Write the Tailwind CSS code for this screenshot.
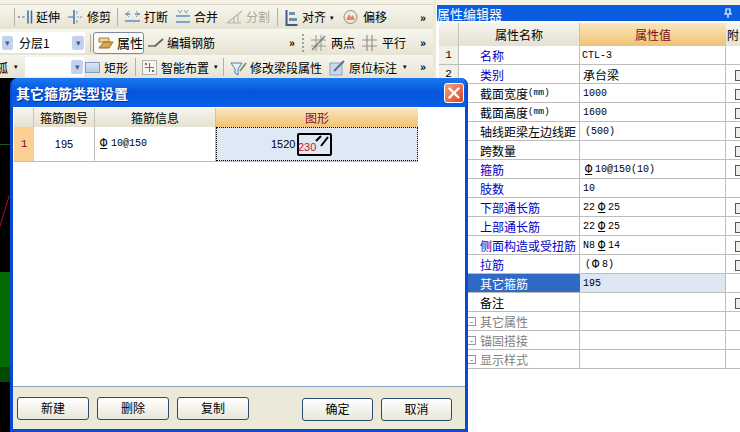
<!DOCTYPE html>
<html lang="zh"><head><meta charset="utf-8">
<script src="https://cdn.jsdelivr.net/npm/@tailwindcss/browser@4"></script>
<title>属性编辑器</title></head>
<body class="m-0">
<div class="relative w-[740px] h-[432px] overflow-hidden flex bg-[#ece9d8] text-[12px] leading-none text-black font-['Noto_Sans_CJK_SC','Liberation_Sans',sans-serif]">

<!-- left: toolbars + canvas -->
<div class="w-[433px] h-full flex flex-col shrink-0">
  <div class="h-[5px] bg-[#f3f1e6] border-b border-[#d8d4c0]"></div>
  <!-- row 1 -->
  <div class="h-[24px] flex items-center bg-gradient-to-b from-[#f7f6ee] to-[#e6e3d2] shrink-0 pl-[14px] relative">
    <div class="w-px h-[18px] bg-[#b5b19c] mr-[2px]"></div>
    <svg class="w-[16px] h-[16px] mr-[3px]" viewBox="0 0 16 16"><path d="M1 8h3M5.5 8h3" stroke="#5a8fc0" stroke-width="1.5" stroke-dasharray="2 1"/><path d="M11 1.5v13M14.5 1.5v13" stroke="#3a6ea5" stroke-width="1.5"/></svg>
    <span class="w-[24px] mr-[8px]">延伸</span>
    <svg class="w-[16px] h-[16px] mr-[3px]" viewBox="0 0 16 16"><path d="M6 1v14" stroke="#3a6ea5" stroke-width="1.5"/><path d="M0 8h5" stroke="#6f9cc5" stroke-width="1.5"/><path d="M9 8h6" stroke="#9bb9d6" stroke-width="1.5" stroke-dasharray="2 1"/><path d="M9 2v3M9 11v3" stroke="#6f9cc5"/></svg>
    <span class="w-[24px] mr-[6px]">修剪</span>
    <div class="w-px h-[18px] bg-[#b5b19c] mr-[6px]"></div>
    <svg class="w-[17px] h-[16px] mr-[3px]" viewBox="0 0 17 16"><path d="M1 5h5M11 5h5M1 12h15" stroke="#5a8fc0" stroke-width="1.5"/><path d="M5 2l-3 3 3 3M12 2l3 3-3 3" stroke="#7aa0c4" fill="none"/></svg>
    <span class="w-[24px] mr-[7px]">打断</span>
    <svg class="w-[16px] h-[16px] mr-[3px]" viewBox="0 0 16 16"><path d="M1 7h14M1 13h14" stroke="#5a8fc0" stroke-width="1.5"/><path d="M3 1l2 3 2-3M9 1l2 3 2-3" stroke="#7aa0c4" fill="none"/></svg>
    <span class="w-[24px] mr-[8px]">合并</span>
    <svg class="w-[18px] h-[16px] mr-[2px]" viewBox="0 0 18 16"><path d="M1 14L16 2M1 14h14M8 14V8M12 14V5" stroke="#b9b7a8" stroke-width="1.2" fill="none"/></svg>
    <span class="w-[24px] mr-[7px] text-[#a9a798]">分割</span>
    <div class="w-px h-[18px] bg-[#b5b19c] mr-[7px]"></div>
    <svg class="w-[13px] h-[17px] mr-[4px]" viewBox="0 0 13 17"><path d="M1.5 1v15h11" stroke="#445a78" stroke-width="2" fill="none"/><rect x="4" y="3" width="6" height="3" fill="#6f8fb5"/><rect x="4" y="9" width="8" height="3" fill="#6f8fb5"/></svg>
    <span class="w-[24px] mr-[4px]">对齐</span>
    <span class="text-[7px] w-[6px] mr-[7px]">▾</span>
    <svg class="w-[15px] h-[16px] mr-[5px]" viewBox="0 0 15 16"><circle cx="7.5" cy="8" r="6.5" fill="#f4ead8" stroke="#9b8a70"/><path d="M3 11l3-6 2 3 2-2 2 5z" fill="#d98a7a"/></svg>
    <span class="w-[24px]">偏移</span>
    <span class="ml-auto mr-[5px] text-[11px] font-bold w-[8px]">»</span>
  </div>
  <!-- row 2 -->
  <div class="h-[26px] flex items-center bg-gradient-to-b from-[#f7f6ee] to-[#e6e3d2] border-t border-[#f8f7f0] shrink-0 relative">
    <div class="w-[14px] h-[21px] bg-white flex items-center pl-[2px]"><div class="w-[11px] h-[14px] bg-[#c4d2ec] rounded-[2px] text-[#3d5f9c] text-[9px] flex items-center justify-center">▾</div></div>
    <div class="w-[71px] h-[21px] bg-white flex items-center pl-[5px] pr-[1px] justify-between"><span>分层1</span><div class="w-[12px] h-[14px] bg-[#c4d2ec] rounded-[2px] text-[#3d5f9c] text-[9px] flex items-center justify-center">▾</div></div>
    <div class="w-px h-[18px] bg-[#b5b19c] ml-[5px] mr-[2px]"></div>
    <div class="w-[51px] h-[22px] border border-[#7a8ca8] rounded-[3px] bg-[#fbfaf4] flex items-center pl-[4px] mr-[3px]">
      <svg class="w-[16px] h-[14px] mr-[3px]" viewBox="0 0 16 14"><path d="M1 2h10v4H1z" fill="#f2d58c" stroke="#a08040"/><path d="M1 12l5-6h9l-4 6z" fill="#dca94e" stroke="#8a6a30"/></svg>
      <span class="text-[13px]">属性</span>
    </div>
    <svg class="w-[18px] h-[14px] mr-[2px]" viewBox="0 0 18 14"><path d="M1 10h8" stroke="#666" stroke-width="1.5"/><path d="M8 10l8-7" stroke="#6b6b5a" stroke-width="2"/></svg>
    <span class="w-[48px]">编辑钢筋</span>
    <span class="ml-[74px] text-[11px] font-bold w-[8px]">»</span>
    <div class="ml-[5px] h-[18px] border-l-2 border-dotted border-[#a5a18c] mr-[7px]"></div>
    <svg class="w-[15px] h-[16px] mr-[5px]" viewBox="0 0 15 16"><path d="M0 5h15M0 11h15M5 0v16M10 0v16" stroke="#9a9a8c"/><path d="M1 15L14 1" stroke="#6f8a6f" stroke-width="1.5"/></svg>
    <span class="w-[24px] mr-[7px]">两点</span>
    <svg class="w-[15px] h-[16px] mr-[5px]" viewBox="0 0 15 16"><path d="M0 5h15M0 11h15M5 0v16M10 0v16" stroke="#9a8f8c" stroke-width="1.2"/></svg>
    <span class="w-[24px]">平行</span>
    <span class="ml-auto mr-[5px] text-[11px] font-bold w-[8px]">»</span>
  </div>
  <!-- row 3 -->
  <div class="h-[23px] flex items-center bg-gradient-to-b from-[#f7f6ee] to-[#e6e3d2] shrink-0 relative">
    <span class="w-[8px] overflow-hidden whitespace-nowrap flex justify-end mr-[6px] mt-[3px]">孤</span>
    <span class="text-[7px] w-[6px] mr-[5px]">▾</span>
    <div class="w-[59px] h-[20px] bg-white flex items-center justify-end pr-[1px] mr-[1px]"><div class="w-[12px] h-[14px] bg-[#c4d2ec] rounded-[2px] text-[#3d5f9c] text-[9px] flex items-center justify-center">▾</div></div>
    <div class="w-[15px] h-[11px] bg-gradient-to-b from-[#dbe6f5] to-[#b5cbe8] border border-[#7f9cc4] mr-[4px] mt-[2px]"></div>
    <span class="w-[24px] mr-[7px] mt-[3px]">矩形</span>
    <div class="w-px h-[18px] bg-[#b5b19c] mr-[6px]"></div>
    <svg class="w-[15px] h-[15px] mr-[4px] mt-[2px]" viewBox="0 0 15 15"><rect x=".5" y=".5" width="14" height="14" fill="#f4f4ec" stroke="#777" stroke-dasharray="1 1"/><path d="M7.500 3v9M3 7.500h9" stroke="#5a8a5a"/><rect x="3" y="3" width="2" height="2" fill="#c05a4a"/><rect x="10" y="10" width="2" height="2" fill="#4a6fb5"/></svg>
    <span class="w-[48px] mr-[5px] mt-[3px]">智能布置</span>
    <span class="text-[7px] w-[6px] mr-[3px]">▾</span>
    <div class="w-px h-[18px] bg-[#b5b19c] mr-[6px]"></div>
    <svg class="w-[17px] h-[16px] mr-[3px] mt-[2px]" viewBox="0 0 17 16"><path d="M1 3h11L8 9v6L5 13V9z" fill="#e8f0f8" stroke="#4f7fa8"/><path d="M10 11l6-8" stroke="#6b8a5a" stroke-width="1.5"/></svg>
    <span class="w-[72px] mr-[7px] mt-[3px]">修改梁段属性</span>
    <svg class="w-[16px] h-[16px] mr-[4px] mt-[2px]" viewBox="0 0 16 16"><rect x="1" y="3" width="12" height="12" fill="#c9d8ea" stroke="#8aa2c0"/><path d="M5 11L15 1" stroke="#5a6f8a" stroke-width="2"/></svg>
    <span class="w-[48px] mr-[6px] mt-[3px]">原位标注</span>
    <span class="text-[7px] w-[6px]">▾</span>
    <span class="ml-auto mr-[5px] text-[11px] font-bold w-[8px]">»</span>
  </div>
  <!-- canvas -->
  <div class="flex-1 bg-black flex flex-col relative">
    <div class="h-[67px] shrink-0 border-b border-[#1c5a1c]"></div>
    <div class="h-[127px] shrink-0"></div>
    <div class="h-[95px] shrink-0 bg-[#056b05]"></div>
    <div class="h-[15px] shrink-0 bg-[#034a03]"></div>
  </div>
</div>

<!-- gutter -->
<div class="w-[3px] bg-[#ece9d8] shrink-0"></div>

<!-- property panel -->
<div class="flex-1 h-full bg-white flex flex-col min-w-0">
  <div class="h-[5px] bg-[#f3f1e6] shrink-0"></div>
  <div class="h-[16px] shrink-0 ml-px bg-[#0a5ce0] text-white text-[13px] flex items-center justify-between pr-[8px]">
    <span>属性编辑器</span>
    <svg class="w-[8px] h-[10px]" viewBox="0 0 8 10"><path d="M2 1h4v5H2zM0 6h8M4 6v4" stroke="#fff" stroke-width="1.2" fill="none"/></svg>
  </div>
  <div class="pl-[3px] pt-[2px] text-[12px]">
    <div class="grid grid-cols-[20px_121px_146px_20px] h-[23px] text-center items-stretch">
      <div class="bg-gradient-to-b from-[#f6f5ee] to-[#e4e1d0] border-r border-[#c8c5b2]"></div>
      <div class="bg-gradient-to-b from-[#f6f5ee] to-[#e4e1d0] flex items-center justify-center border-r border-[#c8c5b2]">属性名称</div>
      <div class="bg-gradient-to-b from-[#fbe6bd] to-[#f0c272] flex items-center justify-center text-[#7a0c1e]">属性值</div>
      <div class="bg-gradient-to-b from-[#f6f5ee] to-[#e4e1d0] flex items-center pl-px">附</div>
    </div>

    <div class="grid grid-cols-[20px_121px_146px_14px] h-[20px] border-y border-[#bdbdbd] -mt-px [&>div]:pt-px">
      <div class="bg-[#f3f1e7] border-r border-[#bdbdbd] flex items-center justify-center font-['Liberation_Mono'] text-[11px]">1</div>
      <div class="border-r border-[#bdbdbd] flex items-center pl-[21px] text-[#0000c8]">名称</div>
      <div class="border-r border-[#bdbdbd] flex items-center pl-[2px] font-['Liberation_Mono'] text-[10px]">CTL-3</div><div></div>
    </div>
    <div class="grid grid-cols-[20px_121px_146px_14px] h-[19px] border-b border-[#bdbdbd] [&>div]:pt-px">
      <div class="bg-[#f3f1e7] border-r border-[#bdbdbd] flex items-center justify-center font-['Liberation_Mono'] text-[11px]">2</div>
      <div class="border-r border-[#bdbdbd] flex items-center pl-[21px] text-[#0000c8]">类别</div>
      <div class="border-r border-[#bdbdbd] flex items-center pl-[3px]">承台梁</div>
      <div class="pl-[9px] flex items-center"><div class="w-[12px] h-[11px] mt-[2px] shrink-0 border border-[#555] bg-[#eeeeea]"></div></div>
    </div>
    <div class="grid grid-cols-[20px_121px_146px_14px] h-[19px] border-b border-[#bdbdbd] [&>div]:pt-px">
      <div class="bg-[#f3f1e7] border-r border-[#bdbdbd]"></div>
      <div class="border-r border-[#bdbdbd] flex items-center pl-[21px] whitespace-nowrap">截面宽度<span class="font-['Liberation_Mono'] text-[9px]">(mm)</span></div>
      <div class="border-r border-[#bdbdbd] flex items-center pl-[3px] font-['Liberation_Mono'] text-[10px]">1000</div>
      <div class="pl-[9px] flex items-center"><div class="w-[12px] h-[11px] mt-[2px] shrink-0 border border-[#555] bg-[#eeeeea]"></div></div>
    </div>
    <div class="grid grid-cols-[20px_121px_146px_14px] h-[19px] border-b border-[#bdbdbd] [&>div]:pt-px">
      <div class="bg-[#f3f1e7] border-r border-[#bdbdbd]"></div>
      <div class="border-r border-[#bdbdbd] flex items-center pl-[21px] whitespace-nowrap">截面高度<span class="font-['Liberation_Mono'] text-[9px]">(mm)</span></div>
      <div class="border-r border-[#bdbdbd] flex items-center pl-[3px] font-['Liberation_Mono'] text-[10px]">1600</div>
      <div class="pl-[9px] flex items-center"><div class="w-[12px] h-[11px] mt-[2px] shrink-0 border border-[#555] bg-[#eeeeea]"></div></div>
    </div>
    <div class="grid grid-cols-[20px_121px_146px_14px] h-[19px] border-b border-[#bdbdbd] [&>div]:pt-px">
      <div class="bg-[#f3f1e7] border-r border-[#bdbdbd]"></div>
      <div class="border-r border-[#bdbdbd] flex items-center pl-[21px] whitespace-nowrap">轴线距梁左边线距</div>
      <div class="border-r border-[#bdbdbd] flex items-center pl-[5px] font-['Liberation_Mono'] text-[10px]">(500)</div>
      <div class="pl-[9px] flex items-center"><div class="w-[12px] h-[11px] mt-[2px] shrink-0 border border-[#555] bg-[#eeeeea]"></div></div>
    </div>
    <div class="grid grid-cols-[20px_121px_146px_14px] h-[19px] border-b border-[#bdbdbd] [&>div]:pt-px">
      <div class="bg-[#f3f1e7] border-r border-[#bdbdbd]"></div>
      <div class="border-r border-[#bdbdbd] flex items-center pl-[21px]">跨数量</div>
      <div class="border-r border-[#bdbdbd]"></div>
      <div class="pl-[9px] flex items-center"><div class="w-[12px] h-[11px] mt-[2px] shrink-0 border border-[#555] bg-[#eeeeea]"></div></div>
    </div>
    <div class="grid grid-cols-[20px_121px_146px_14px] h-[19px] border-b border-[#bdbdbd] [&>div]:pt-px">
      <div class="bg-[#f3f1e7] border-r border-[#bdbdbd]"></div>
      <div class="border-r border-[#bdbdbd] flex items-center pl-[21px] text-[#0000c8]">箍筋</div>
      <div class="border-r border-[#bdbdbd] flex items-center pl-[5px] font-['Liberation_Mono'] text-[10px] whitespace-nowrap"><span class="underline text-[12px] w-[9px] mr-px">Φ</span>10@150(10)</div>
      <div class="pl-[9px] flex items-center"><div class="w-[12px] h-[11px] mt-[2px] shrink-0 border border-[#555] bg-[#eeeeea]"></div></div>
    </div>
    <div class="grid grid-cols-[20px_121px_146px_14px] h-[19px] border-b border-[#bdbdbd] [&>div]:pt-px">
      <div class="bg-[#f3f1e7] border-r border-[#bdbdbd]"></div>
      <div class="border-r border-[#bdbdbd] flex items-center pl-[21px] text-[#0000c8]">肢数</div>
      <div class="border-r border-[#bdbdbd] flex items-center pl-[3px] font-['Liberation_Mono'] text-[10px]">10</div><div></div>
    </div>
    <div class="grid grid-cols-[20px_121px_146px_14px] h-[19px] border-b border-[#bdbdbd] [&>div]:pt-px">
      <div class="bg-[#f3f1e7] border-r border-[#bdbdbd]"></div>
      <div class="border-r border-[#bdbdbd] flex items-center pl-[21px] text-[#0000c8]">下部通长筋</div>
      <div class="border-r border-[#bdbdbd] flex items-center pl-[3px] font-['Liberation_Mono'] text-[10px]">22<span class="underline text-[12px] w-[9px] ml-[3px] mr-px">Φ</span>25</div>
      <div class="pl-[9px] flex items-center"><div class="w-[12px] h-[11px] mt-[2px] shrink-0 border border-[#555] bg-[#eeeeea]"></div></div>
    </div>
    <div class="grid grid-cols-[20px_121px_146px_14px] h-[19px] border-b border-[#bdbdbd] [&>div]:pt-px">
      <div class="bg-[#f3f1e7] border-r border-[#bdbdbd]"></div>
      <div class="border-r border-[#bdbdbd] flex items-center pl-[21px] text-[#0000c8]">上部通长筋</div>
      <div class="border-r border-[#bdbdbd] flex items-center pl-[3px] font-['Liberation_Mono'] text-[10px]">22<span class="underline text-[12px] w-[9px] ml-[3px] mr-px">Φ</span>25</div>
      <div class="pl-[9px] flex items-center"><div class="w-[12px] h-[11px] mt-[2px] shrink-0 border border-[#555] bg-[#eeeeea]"></div></div>
    </div>
    <div class="grid grid-cols-[20px_121px_146px_14px] h-[19px] border-b border-[#bdbdbd] [&>div]:pt-px">
      <div class="bg-[#f3f1e7] border-r border-[#bdbdbd]"></div>
      <div class="border-r border-[#bdbdbd] flex items-center pl-[21px] text-[#0000c8] whitespace-nowrap">侧面构造或受扭筋</div>
      <div class="border-r border-[#bdbdbd] flex items-center pl-[3px] font-['Liberation_Mono'] text-[10px]">N8<span class="underline text-[12px] w-[9px] ml-[3px] mr-px">Φ</span>14</div>
      <div class="pl-[9px] flex items-center"><div class="w-[12px] h-[11px] mt-[2px] shrink-0 border border-[#555] bg-[#eeeeea]"></div></div>
    </div>
    <div class="grid grid-cols-[20px_121px_146px_14px] h-[19px] border-b border-[#bdbdbd] [&>div]:pt-px">
      <div class="bg-[#f3f1e7] border-r border-[#bdbdbd]"></div>
      <div class="border-r border-[#bdbdbd] flex items-center pl-[21px] text-[#0000c8]">拉筋</div>
      <div class="border-r border-[#bdbdbd] flex items-center pl-[5px] font-['Liberation_Mono'] text-[10px]">(<span class="text-[12px] w-[9px] mx-px">Φ</span>8)</div>
      <div class="pl-[9px] flex items-center"><div class="w-[12px] h-[11px] mt-[2px] shrink-0 border border-[#555] bg-[#eeeeea]"></div></div>
    </div>
    <div class="grid grid-cols-[20px_121px_146px_14px] h-[19px] border-b border-[#bdbdbd] [&>div]:pt-px">
      <div class="bg-[#f3f1e7] border-r border-[#bdbdbd]"></div>
      <div class="bg-[#316ac5] text-white flex items-center pl-[21px]">其它箍筋</div>
      <div class="bg-[#dde7f4] border-r border-[#bdbdbd] flex items-center pl-[3px] font-['Liberation_Mono'] text-[10px]">195</div><div></div>
    </div>
    <div class="grid grid-cols-[20px_121px_146px_14px] h-[19px] border-b border-[#bdbdbd] [&>div]:pt-px">
      <div class="bg-[#f3f1e7] border-r border-[#bdbdbd]"></div>
      <div class="border-r border-[#bdbdbd] flex items-center pl-[21px]">备注</div>
      <div class="border-r border-[#bdbdbd]"></div>
      <div class="pl-[9px] flex items-center"><div class="w-[12px] h-[11px] mt-[2px] shrink-0 border border-[#555] bg-[#eeeeea]"></div></div>
    </div>
    <div class="grid grid-cols-[20px_121px_146px_14px] h-[19px] border-b border-[#bdbdbd] [&>div]:pt-px">
      <div class="bg-[#f3f1e7] border-r border-[#bdbdbd]"></div>
      <div class="border-r border-[#bdbdbd] flex items-center pl-[8px] text-[#808080]"><span class="w-[9px] h-[9px] border border-[#999] mr-[4px] flex items-center justify-center text-[9px] text-[#555]">-</span>其它属性</div>
      <div class="border-r border-[#bdbdbd]"></div><div></div>
    </div>
    <div class="grid grid-cols-[20px_121px_146px_14px] h-[19px] border-b border-[#bdbdbd] [&>div]:pt-px">
      <div class="bg-[#f3f1e7] border-r border-[#bdbdbd]"></div>
      <div class="border-r border-[#bdbdbd] flex items-center pl-[8px] text-[#808080]"><span class="w-[9px] h-[9px] border border-[#999] mr-[4px] flex items-center justify-center text-[9px] text-[#555]">-</span>锚固搭接</div>
      <div class="border-r border-[#bdbdbd]"></div><div></div>
    </div>
    <div class="grid grid-cols-[20px_121px_146px_14px] h-[19px] border-b border-[#bdbdbd] [&>div]:pt-px">
      <div class="bg-[#f3f1e7] border-r border-[#bdbdbd]"></div>
      <div class="border-r border-[#bdbdbd] flex items-center pl-[8px] text-[#808080]"><span class="w-[9px] h-[9px] border border-[#999] mr-[4px] flex items-center justify-center text-[9px] text-[#555]">-</span>显示样式</div>
      <div class="border-r border-[#bdbdbd]"></div><div></div>
    </div>
  </div>
</div>

<!-- red diagonal on canvas -->
<svg class="absolute left-0 top-[195px] w-[10px] h-[31px] pointer-events-none" viewBox="0 0 10 31"><path d="M9.500 0L0 31" stroke="#b01030" stroke-width="1"/></svg>

<!-- dialog window -->
<div class="absolute left-[10px] top-[78px] w-[458px] h-[354px] bg-[#0a4fd8] rounded-t-[7px] border-x-[3px] border-b-[3px] border-[#0a4ad0] flex flex-col">
  <div class="h-[29px] shrink-0 -mx-px flex items-center justify-between rounded-t-[6px] bg-gradient-to-b from-[#1a78f0] via-[#0455dc] to-[#0a5fe8] pl-[4px] pr-[2px]">
    <span class="text-white font-bold text-[14px] [text-shadow:1px_1px_0_#0a2f90]">其它箍筋类型设置</span>
    <div class="w-[20px] h-[20px] rounded-[3px] border border-white bg-gradient-to-br from-[#f0a080] to-[#d8401c] flex items-center justify-center">
      <svg class="w-[12px] h-[12px]" viewBox="0 0 12 12"><path d="M1.500 1.500l9 9M10.500 1.500l-9 9" stroke="#fff" stroke-width="2.400" stroke-linecap="round"/></svg>
    </div>
  </div>
  <div class="flex-1 flex flex-col bg-[#ece9d8] min-h-0">
    <div class="h-[280px] shrink-0 bg-white border-b border-[#8fa3ba] pl-px pt-px">
      <div class="w-[404px] border-b border-[#bdbdbd]">
        <div class="grid grid-cols-[20px_61px_121px_202px] h-[19px]">
          <div class="bg-gradient-to-b from-[#f6f5ee] to-[#e4e1d0] border-r border-[#c8c5b2]"></div>
          <div class="bg-gradient-to-b from-[#f6f5ee] to-[#e4e1d0] border-r border-[#c8c5b2] flex items-center justify-center">箍筋图号</div>
          <div class="bg-gradient-to-b from-[#f6f5ee] to-[#e4e1d0] border-r border-[#c8c5b2] flex items-center justify-center">箍筋信息</div>
          <div class="bg-gradient-to-b from-[#fbe6bd] to-[#f0c272] flex items-center justify-center text-[#8a1030]">图形</div>
        </div>
        <div class="grid grid-cols-[20px_61px_121px_202px] h-[34px]">
          <div class="bg-[#fbd193] flex items-center justify-center font-['Liberation_Mono'] text-[11px] text-[#7a0c1e]">1</div>
          <div class="border-r border-[#bdbdbd] flex items-center justify-center font-['Liberation_Sans'] text-[11px]">195</div>
          <div class="border-r border-[#bdbdbd] flex items-center pl-[5px] font-['Liberation_Mono'] text-[10px] whitespace-nowrap"><span class="underline text-[12px] w-[9px] mr-[2px]">Φ</span>10@150</div>
          <div class="bg-[#dfe8f5] border border-dotted border-black flex items-center pl-[54px]">
            <span class="font-['Liberation_Sans'] text-[11px] w-[26px]">1520</span>
            <div class="relative w-[35px] h-[23px] border-2 border-black rounded-[2px] flex items-end">
              <span class="font-['Liberation_Sans'] text-[11px] text-[#d0102c] mb-[1px] -ml-px">230</span>
              <svg class="absolute right-0 top-0 w-[15px] h-[15px]" viewBox="0 0 15 15"><path d="M1 6L6 1M6 11L13 2" stroke="#000" stroke-width="2"/></svg>
            </div>
          </div>
        </div>
      </div>
    </div>
    <div class="flex-1 flex items-center pl-[4px] pr-[13px] text-[12px]">
      <div class="w-[72px] h-[23px] mr-[8px] border border-[#2a4a70] rounded-[3px] bg-gradient-to-b from-white to-[#e8e6d8] flex items-center justify-center">新建</div>
      <div class="w-[72px] h-[23px] mr-[8px] border border-[#2a4a70] rounded-[3px] bg-gradient-to-b from-white to-[#e8e6d8] flex items-center justify-center">删除</div>
      <div class="w-[72px] h-[23px] border border-[#2a4a70] rounded-[3px] bg-gradient-to-b from-white to-[#e8e6d8] flex items-center justify-center">复制</div>
      <div class="ml-auto w-[71px] h-[23px] mr-[8px] mt-[2px] border border-[#2a4a70] rounded-[3px] bg-gradient-to-b from-white to-[#e8e6d8] flex items-center justify-center">确定</div>
      <div class="w-[71px] h-[23px] mt-[2px] border border-[#2a4a70] rounded-[3px] bg-gradient-to-b from-white to-[#e8e6d8] flex items-center justify-center">取消</div>
    </div>
  </div>
</div>
</div>
</body></html>
